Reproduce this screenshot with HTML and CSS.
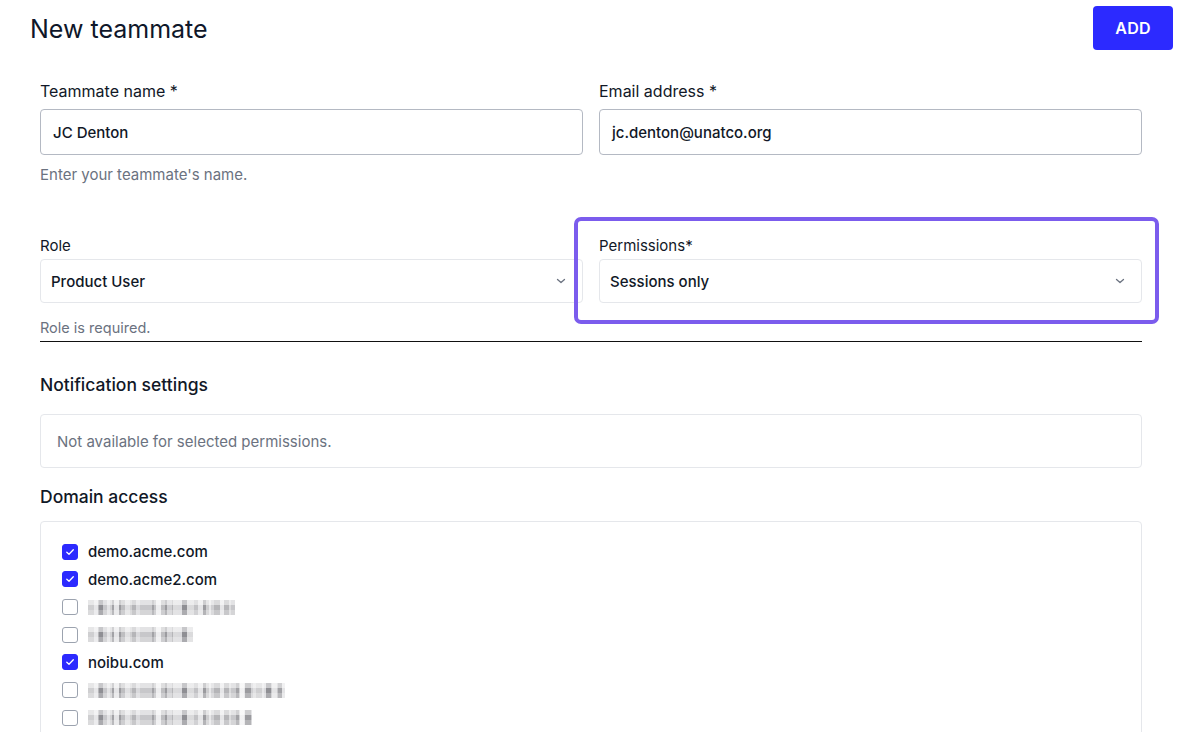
FILE: index.html
```html
<!DOCTYPE html>
<html lang="en">
<head>
<meta charset="utf-8">
<title>New teammate</title>
<link rel="stylesheet" href="styles.css">
</head>
<body>
<div class="page">
  <header class="header">
    <h1 class="title">New teammate</h1>
    <button class="add-btn" type="button">ADD</button>
  </header>

  <form class="form">
    <div class="row">
      <div class="field">
        <label class="label label-lg">Teammate name *</label>
        <div class="input">JC Denton</div>
        <div class="helper">Enter your teammate's name.</div>
      </div>
      <div class="field">
        <label class="label label-lg">Email address *</label>
        <div class="input">jc.denton@unatco.org</div>
      </div>
    </div>

    <div class="row row-2">
      <div class="field">
        <label class="label">Role</label>
        <div class="select">
          <span>Product User</span>
          <svg class="chev" width="10" height="6" viewBox="0 0 10 6"><path d="M1.5 1.5 L5 4.5 L8.5 1.5" fill="none" stroke="#6b7280" stroke-width="1.3" stroke-linecap="round" stroke-linejoin="round"/></svg>
        </div>
        <div class="helper helper-role">Role is required.</div>
      </div>
      <div class="field field-perm">
        <div class="highlight"></div>
        <label class="label">Permissions*</label>
        <div class="select">
          <span>Sessions only</span>
          <svg class="chev" width="10" height="6" viewBox="0 0 10 6"><path d="M1.5 1.5 L5 4.5 L8.5 1.5" fill="none" stroke="#6b7280" stroke-width="1.3" stroke-linecap="round" stroke-linejoin="round"/></svg>
        </div>
      </div>
    </div>
    <div class="divider"></div>

    <h2 class="section">Notification settings</h2>
    <div class="box notice">Not available for selected permissions.</div>

    <h2 class="section">Domain access</h2>
    <div class="box domains">
      <div class="dom"><span class="cb checked"><svg width="12" height="12" viewBox="0 0 12 12"><path d="M2.8 6.2 L5 8.3 L9.3 3.8" fill="none" stroke="#fff" stroke-width="1.3" stroke-linecap="round" stroke-linejoin="round"/></svg></span><span class="dom-name">demo.acme.com</span></div>
      <div class="dom"><span class="cb checked"><svg width="12" height="12" viewBox="0 0 12 12"><path d="M2.8 6.2 L5 8.3 L9.3 3.8" fill="none" stroke="#fff" stroke-width="1.3" stroke-linecap="round" stroke-linejoin="round"/></svg></span><span class="dom-name">demo.acme2.com</span></div>
      <div class="dom"><span class="cb"></span><span class="blur b1"></span></div>
      <div class="dom"><span class="cb"></span><span class="blur b2"></span></div>
      <div class="dom"><span class="cb checked"><svg width="12" height="12" viewBox="0 0 12 12"><path d="M2.8 6.2 L5 8.3 L9.3 3.8" fill="none" stroke="#fff" stroke-width="1.3" stroke-linecap="round" stroke-linejoin="round"/></svg></span><span class="dom-name">noibu.com</span></div>
      <div class="dom"><span class="cb"></span><span class="blur b3"></span></div>
      <div class="dom"><span class="cb"></span><span class="blur b4"></span></div>
      <div class="dom"><span class="cb"></span><span class="blur b2"></span></div>
    </div>
  </form>
</div>
</body>
</html>
```

FILE: styles.css
```css
* { box-sizing: border-box; }
html, body { margin: 0; padding: 0; background: #fff; }
body {
  font-family: Inter, "Noto Sans", "Liberation Sans", sans-serif;
  color: #111827;
  width: 1180px;
  height: 732px;
  overflow: hidden;
}
.page { padding: 6px 8px 0 30px; }
.header {
  display: flex;
  align-items: center;
  justify-content: space-between;
  height: 44px;
}
.title {
  margin: 0;
  font-size: 25px;
  font-weight: 400;
  color: #0f172a;
  line-height: 32px;
  padding-top: 1px;
}
.add-btn {
  width: 80px;
  height: 44px;
  margin-right: -1px;
  border: 0;
  border-radius: 4px;
  background: #2c2aff;
  color: #fff;
  font-family: inherit;
  font-size: 16px;
  font-weight: 600;
  letter-spacing: 0.2px;
}
.form { width: 1102px; margin-left: 10px; padding-top: 31px; }
.row { display: grid; grid-template-columns: 543px 543px; column-gap: 16px; }
.field { display: flex; flex-direction: column; position: relative; }
.label {
  font-size: 15px;
  line-height: 20px;
  font-weight: 400;
  color: #111827;
}
.label-lg { font-size: 16px; }
.input {
  margin-top: 8px;
  height: 46px;
  border: 1px solid #b4b9c3;
  border-radius: 4px;
  padding: 0 12px;
  display: flex;
  align-items: center;
  font-size: 15px;
  font-weight: 500;
  color: #111827;
}
.helper {
  margin-top: 10px;
  font-size: 15px;
  line-height: 20px;
  color: #6b7280;
}
.row-2 { margin-top: 51px; }
.select {
  margin-top: 3px;
  height: 44px;
  border: 1px solid #e5e7eb;
  border-radius: 4px;
  padding: 0 16px 0 10px;
  display: flex;
  align-items: center;
  justify-content: space-between;
  font-size: 15px;
  font-weight: 500;
  color: #111827;
}
.helper-role { margin-top: 15px; font-size: 14.5px; }
.divider { height: 1px; background: #111; margin-top: 3px; }
.highlight {
  position: absolute;
  left: -25px;
  top: -19px;
  width: 585px;
  height: 107px;
  border: 4px solid #7b5ced;
  border-radius: 7px;
  pointer-events: none;
}
.section {
  margin: 31px 0 0;
  font-size: 17.5px;
  line-height: 24px;
  font-weight: 500;
  color: #111827;
}
.box {
  border: 1px solid #e5e7eb;
  border-radius: 4px;
}
.notice {
  margin-top: 17px;
  height: 54px;
  display: flex;
  align-items: center;
  padding-left: 16px;
  font-size: 15px;
  color: #6b7280;
}
.section + .box.domains { margin-top: 12px; }
.notice + .section { margin-top: 17px; }
.domains {
  padding: 16px 21px;
  height: 260px;
}
.dom {
  height: 27.67px;
  display: flex;
  align-items: center;
  gap: 10px;
}
.cb {
  width: 16px;
  height: 16px;
  border: 1px solid #9ca3af;
  border-radius: 3px;
  display: inline-flex;
  align-items: center;
  justify-content: center;
  flex: none;
  background: #fff;
}
.cb.checked { background: #2c2aff; border-color: #2c2aff; }
.dom-name { font-size: 15px; font-weight: 500; color: #111827; }
.blur {
  height: 15px;
  display: inline-block;
  background:
    repeating-linear-gradient(180deg, rgba(255,255,255,0.5) 0 5px, rgba(255,255,255,0) 5px 10px, rgba(255,255,255,0.25) 10px 15px),
    repeating-linear-gradient(90deg, rgba(255,255,255,0.35) 0 11px, rgba(255,255,255,0) 11px 19px, rgba(255,255,255,0.5) 19px 24px, rgba(0,0,0,0) 24px 33px),
    repeating-linear-gradient(90deg, #b5b5b8 0 6px, #d9d9dc 6px 10px, #8f8f94 10px 15px, #c7c7ca 15px 22px, #a2a2a6 22px 26px, #e4e4e6 26px 31px, #9b9b9f 31px 37px, #cfcfd2 37px 42px);
}
.b1 { width: 147px; }
.b2 { width: 105px; }
.b3 { width: 197px; }
.b4 { width: 164px; }
```
